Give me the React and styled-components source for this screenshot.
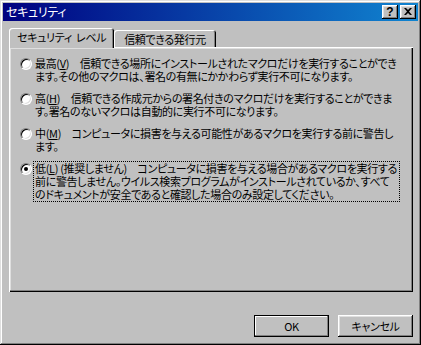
import React from "react";
import styled, { createGlobalStyle } from "styled-components";

const Global = createGlobalStyle`
  html, body { margin: 0; padding: 0; background: #c0c0c0; }
  #root { width: 421px; height: 345px; }
`;

const Win = styled.div`
  width: 421px;
  height: 345px;
  box-sizing: border-box;
  padding: 3px;
  background: #c0c0c0;
  box-shadow: inset -1px -1px #000, inset 1px 1px #dfdfdf, inset -2px -2px #808080, inset 2px 2px #fff;
  display: flex;
  flex-direction: column;
  font-family: "Noto Sans CJK JP", "Noto Sans", sans-serif;
  font-feature-settings: "palt";
  font-size: 11px;
  letter-spacing: -0.35px;
  color: #000;
`;

const TitleBar = styled.div`
  height: 18px;
  flex: none;
  display: flex;
  align-items: center;
  padding: 0 2px 0 3px;
  background: linear-gradient(90deg, #000080, #1084d0);
  color: #fff;
`;

const Title = styled.div`
  flex: 1;
  font-size: 12px;
  line-height: 18px;
`;

const CapButtons = styled.div`
  display: flex;
  gap: 2px;
`;

const CapButton = styled.div`
  width: 16px;
  height: 14px;
  box-sizing: border-box;
  background: #c0c0c0;
  box-shadow: inset -1px -1px #000, inset 1px 1px #fff, inset -2px -2px #808080, inset 2px 2px #dfdfdf;
  display: flex;
  align-items: center;
  justify-content: center;
  color: #000;
  font-family: "Liberation Sans", Arial, sans-serif;
  font-weight: bold;
  font-size: 12px;
  letter-spacing: 0;
  line-height: 14px;
  padding-bottom: 1px;
`;

const Body = styled.div`
  flex: 1;
  display: flex;
  flex-direction: column;
  padding: 7px 5px 5px 6px;
`;

const TabRow = styled.div`
  height: 19px;
  display: flex;
  align-items: flex-end;
  position: relative;
  z-index: 1;
`;

const Tab = styled.div`
  box-sizing: border-box;
  height: ${(p) => (p.$active ? "20px" : "17px")};
  margin-bottom: ${(p) => (p.$active ? "-1px" : "0")};
  padding: ${(p) => (p.$active ? "0 8px 3px 8px" : "0 10px 0 10px")};
  background: #c0c0c0;
  border-radius: 3px 3px 0 0;
  box-shadow: inset 1px 1px #fff, inset -1px 0 #000, inset -2px 0 #808080;
  display: flex;
  align-items: center;
  white-space: pre;
  line-height: 14px;
`;

const Panel = styled.div`
  box-sizing: border-box;
  height: 245px;
  padding: 9px 10px 0 11px;
  box-shadow: inset 1px 1px #fff, inset -1px -1px #000, inset -2px -2px #808080, inset 2px 2px #dfdfdf;
  display: flex;
  flex-direction: column;
  gap: 7px;
`;

const Option = styled.div`
  display: flex;
  align-items: flex-start;
`;

const Radio = styled.div`
  flex: none;
  width: 12px;
  height: 12px;
  box-sizing: border-box;
  margin-top: 2px;
  margin-right: 1px;
  border-radius: 50%;
  border: 1px solid;
  border-color: #808080 #fff #fff #808080;
  background: #fff;
  box-shadow: inset 1px 1px #000, inset -1px -1px #dfdfdf;
  display: flex;
  align-items: center;
  justify-content: center;
  &::after {
    content: "";
    display: ${(p) => (p.$checked ? "block" : "none")};
    width: 4px;
    height: 4px;
    border-radius: 50%;
    background: #000;
  }
`;

const Label = styled.div`
  padding: 0 2px 0 1px;
  border: 1px dotted ${(p) => (p.$focus ? "#000" : "transparent")};
  line-height: 13px;
  white-space: nowrap;
`;

const Key = styled.span`
  text-decoration: underline;
  text-underline-offset: 1px;
`;

const ButtonRow = styled.div`
  margin-top: auto;
  display: flex;
  justify-content: flex-end;
  gap: 9px;
`;

const Button = styled.div`
  width: 75px;
  height: 22px;
  box-sizing: border-box;
  display: flex;
  align-items: center;
  justify-content: center;
  background: #c0c0c0;
  box-shadow: ${(p) =>
    p.$default
      ? "inset 0 0 0 1px #000, inset -2px -2px #808080, inset 2px 2px #fff"
      : "inset -1px -1px #000, inset 1px 1px #fff, inset -2px -2px #808080, inset 2px 2px #dfdfdf"};
`;

const options = [
  {
    lines: [
      <>最高(<Key>V</Key>)　信頼できる場所にインストールされたマクロだけを実行することができ</>,
      <>ます。その他のマクロは、署名の有無にかかわらず実行不可になります。</>,
    ],
  },
  {
    lines: [
      <>高(<Key>H</Key>)　信頼できる作成元からの署名付きのマクロだけを実行することができま</>,
      <>す。署名のないマクロは自動的に実行不可になります。</>,
    ],
  },
  {
    lines: [
      <>中(<Key>M</Key>)　コンピュータに損害を与える可能性があるマクロを実行する前に警告し</>,
      <>ます。</>,
    ],
  },
  {
    checked: true,
    lines: [
      <>低(<Key>L</Key>) (推奨しません)　コンピュータに損害を与える場合があるマクロを実行する</>,
      <>前に警告しません。ウイルス検索プログラムがインストールされているか、すべて</>,
      <>のドキュメントが安全であると確認した場合のみ設定してください。</>,
    ],
  },
];

export default function App() {
  return (
    <>
      <Global />
      <Win>
        <TitleBar>
          <Title>セキュリティ</Title>
          <CapButtons>
            <CapButton>?</CapButton>
            <CapButton>
              <svg width="8" height="7" viewBox="0 0 8 7">
                <path d="M0 0h2l2 2 2-2h2L5 3.5 8 7H6L4 5 2 7H0l3-3.5z" fill="#000" />
              </svg>
            </CapButton>
          </CapButtons>
        </TitleBar>
        <Body>
          <TabRow>
            <Tab $active>セキュリティ  レベル</Tab>
            <Tab>信頼できる発行元</Tab>
          </TabRow>
          <Panel>
            {options.map((o, i) => (
              <Option key={i}>
                <Radio $checked={o.checked} />
                <Label $focus={o.checked}>
                  {o.lines.map((l, j) => (
                    <div key={j}>{l}</div>
                  ))}
                </Label>
              </Option>
            ))}
          </Panel>
          <ButtonRow>
            <Button $default>OK</Button>
            <Button>キャンセル</Button>
          </ButtonRow>
        </Body>
      </Win>
    </>
  );
}
